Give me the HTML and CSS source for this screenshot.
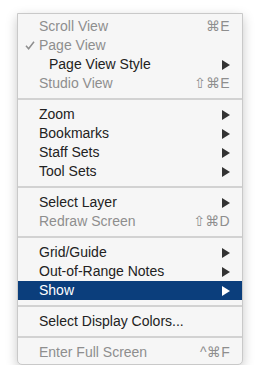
FILE: index.html
```html
<!DOCTYPE html>
<html lang="en">
<head>
    <meta charset="UTF-8">
    <meta name="viewport" content="width=device-width, initial-scale=1.0">
    <title>View Menu</title>

    <link rel="stylesheet" href="styles.css">
</head>
<body>
    <div class="page">
        <div class="menu">
            <div class="menu-item disabled">
                <span class="mark"></span>
                <span class="label">Scroll View</span>
                <span class="shortcut">⌘E</span>
            </div>
            <div class="menu-item disabled">
                <span class="mark">
                    <svg width="10" height="9" viewBox="0 0 10 9"><path d="M1 4.8 L3.6 7.8 L9 0.8" fill="none" stroke="currentColor" stroke-width="1.5"/></svg>
                </span>
                <span class="label">Page View</span>
                <span class="shortcut"></span>
            </div>
            <div class="menu-item">
                <span class="mark"></span>
                <span class="label indent">Page View Style</span>
                <span class="arrow"></span>
            </div>
            <div class="menu-item disabled">
                <span class="mark"></span>
                <span class="label">Studio View</span>
                <span class="shortcut">⇧⌘E</span>
            </div>

            <div class="separator"></div>

            <div class="menu-item">
                <span class="mark"></span>
                <span class="label">Zoom</span>
                <span class="arrow"></span>
            </div>
            <div class="menu-item">
                <span class="mark"></span>
                <span class="label">Bookmarks</span>
                <span class="arrow"></span>
            </div>
            <div class="menu-item">
                <span class="mark"></span>
                <span class="label">Staff Sets</span>
                <span class="arrow"></span>
            </div>
            <div class="menu-item">
                <span class="mark"></span>
                <span class="label">Tool Sets</span>
                <span class="arrow"></span>
            </div>

            <div class="separator"></div>

            <div class="menu-item">
                <span class="mark"></span>
                <span class="label">Select Layer</span>
                <span class="arrow"></span>
            </div>
            <div class="menu-item disabled">
                <span class="mark"></span>
                <span class="label">Redraw Screen</span>
                <span class="shortcut">⇧⌘D</span>
            </div>

            <div class="separator"></div>

            <div class="menu-item">
                <span class="mark"></span>
                <span class="label">Grid/Guide</span>
                <span class="arrow"></span>
            </div>
            <div class="menu-item">
                <span class="mark"></span>
                <span class="label">Out-of-Range Notes</span>
                <span class="arrow"></span>
            </div>
            <div class="menu-item selected">
                <span class="mark"></span>
                <span class="label">Show</span>
                <span class="arrow"></span>
            </div>

            <div class="separator"></div>

            <div class="menu-item">
                <span class="mark"></span>
                <span class="label">Select Display Colors...</span>
                <span class="shortcut"></span>
            </div>

            <div class="separator"></div>

            <div class="menu-item disabled">
                <span class="mark"></span>
                <span class="label">Enter Full Screen</span>
                <span class="shortcut">^⌘F</span>
            </div>
        </div>
    </div>
</body>
</html>
```

FILE: styles.css
```css
/* Page */
body {
    margin: 0;
    background-color: #fff;
    font-family: "Liberation Sans", Arial, sans-serif;
}

.page {
    padding: 13px 17px 0 17px;
}

/* Menu box */
.menu {
    width: 224px;
    padding: 3px 0 2px 0;
    background-color: #f6f6f6;
    border: 1px solid #c9c9c9;
    border-radius: 0 0 5px 5px;
    box-shadow: 0 4px 12px rgba(0, 0, 0, 0.22);
}

/* Menu rows */
.menu-item {
    display: grid;
    grid-template-columns: 21px 1fr auto;
    align-items: center;
    height: 19px;
    padding-right: 12px;
    font-size: 14px;
    line-height: 19px;
    color: #222;
}

.menu-item.disabled {
    color: #8e8e8e;
}

.menu-item.selected {
    background-color: #0b3e7c;
    color: #fff;
}

.mark {
    display: flex;
    align-items: center;
    padding-left: 7px;
}

.label.indent {
    padding-left: 10px;
}

.shortcut {
    font-family: "Liberation Sans", "DejaVu Sans", sans-serif;
    letter-spacing: 0.3px;
}

/* Submenu arrow */
.arrow {
    width: 0;
    height: 0;
    border-top: 5px solid transparent;
    border-bottom: 5px solid transparent;
    border-left: 8px solid #333;
}

.menu-item.selected .arrow {
    border-left-color: #fff;
}

/* Separator */
.separator {
    height: 12px;
    display: flex;
    align-items: center;
}

.separator::before {
    content: '';
    display: block;
    width: 100%;
    height: 2px;
    background-color: #d2d2d2;
}
```
